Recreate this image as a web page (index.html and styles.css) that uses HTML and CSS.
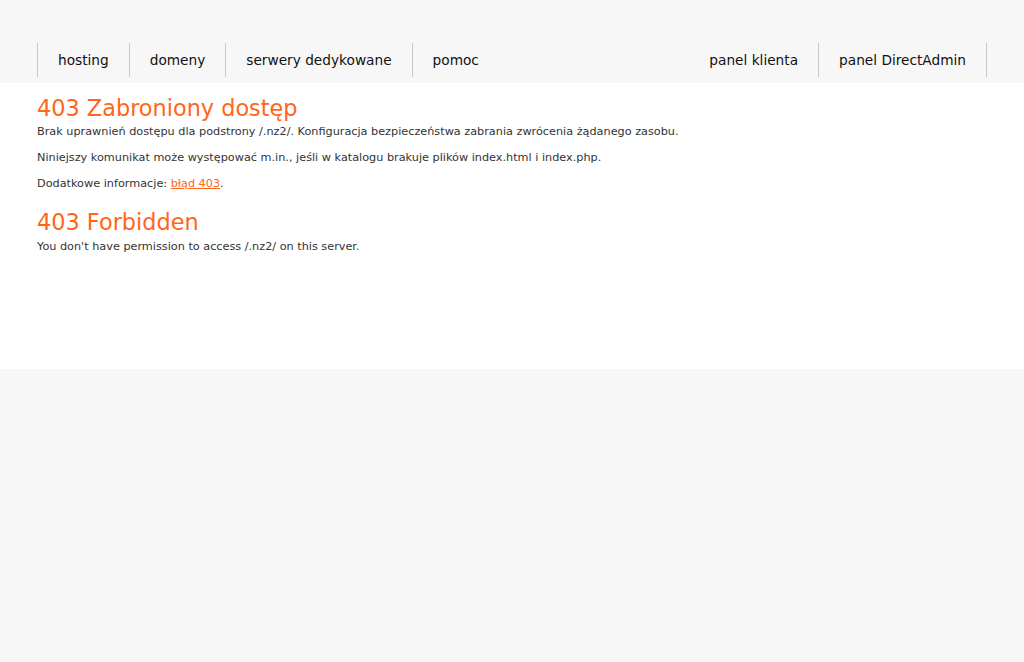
FILE: index.html
```html
<!DOCTYPE html>
<html lang="pl">
<head>
<meta charset="utf-8">
<title>403 Zabroniony dostęp</title>
<link rel="stylesheet" href="styles.css">
</head>
<body>
<header class="topbar">
  <nav class="wrap nav">
    <ul class="menu menu-left">
      <li><a href="#">hosting</a></li>
      <li><a href="#">domeny</a></li>
      <li><a href="#">serwery dedykowane</a></li>
      <li><a href="#">pomoc</a></li>
    </ul>
    <ul class="menu menu-right">
      <li><a href="#">panel klienta</a></li>
      <li><a href="#">panel DirectAdmin</a></li>
    </ul>
  </nav>
</header>
<main class="content">
  <div class="wrap">
    <h1 class="title">403 Zabroniony dostęp</h1>
    <p class="text">Brak uprawnień dostępu dla podstrony /.nz2/. Konfiguracja bezpieczeństwa zabrania zwrócenia żądanego zasobu.</p>
    <p class="text">Niniejszy komunikat może występować m.in., jeśli w katalogu brakuje plików index.html i index.php.</p>
    <p class="text">Dodatkowe informacje: <a class="link" href="#">błąd 403</a>.</p>
    <h2 class="title title-second">403 Forbidden</h2>
    <p class="text">You don't have permission to access /.nz2/ on this server.</p>
  </div>
</main>
</body>
</html>
```
FILE: styles.css
```css
html, body {
  margin: 0;
  padding: 0;
}
body {
  background: #f7f7f7;
  font-family: Verdana, "DejaVu Sans", sans-serif;
  color: #333;
}
.wrap {
  width: 950px;
  margin: 0 auto;
}
.topbar {
  padding: 43px 0 6px;
}
.nav {
  display: flex;
  justify-content: space-between;
}
.menu {
  display: flex;
  list-style: none;
  margin: 0;
  padding: 0;
}
.menu a {
  display: block;
  height: 34px;
  line-height: 34px;
  padding: 0 20px;
  font-size: 13.7px;
  color: #111;
  text-decoration: none;
}
.menu-left li {
  border-left: 1px solid #c8c8c8;
}
.menu-right li {
  border-right: 1px solid #c8c8c8;
}
.content {
  background: #fff;
  height: 286px;
  box-sizing: border-box;
  padding-top: 12px;
}
.title {
  color: #ff6619;
  font-weight: normal;
  font-size: 22.4px;
  line-height: 26px;
  margin: 0 0 4px;
}
.title-second {
  margin: 18px 0 5px;
}
.text {
  font-size: 11.25px;
  line-height: 14px;
  margin: 0 0 12px;
}
.link {
  color: #ff6619;
}
```
